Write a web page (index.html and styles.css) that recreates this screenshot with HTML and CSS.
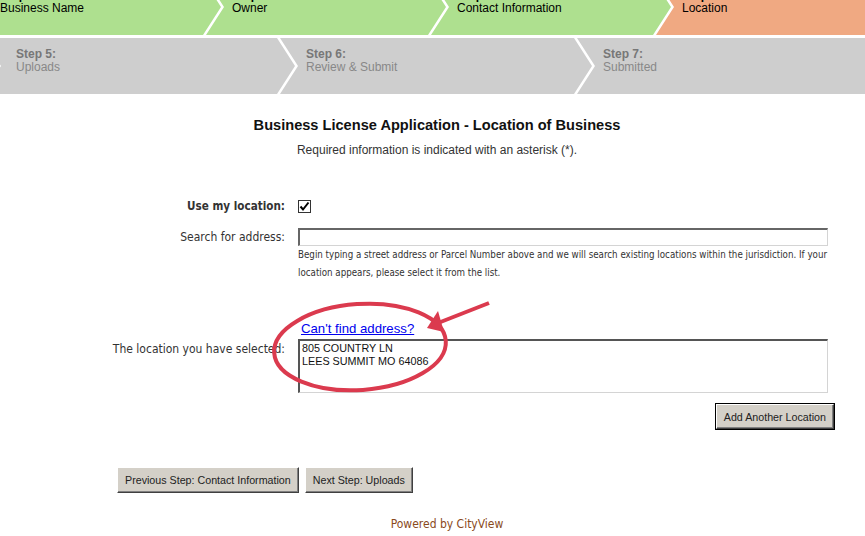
FILE: index.html
```html
<!DOCTYPE html>
<html lang="en">
<head>
    <meta charset="UTF-8">
    <meta name="viewport" content="width=device-width, initial-scale=1.0">
    <title>Business License Application - Location of Business</title>
    <link rel="stylesheet" href="styles.css">
</head>
<body>

    <div class="steps">
        <ul class="step-row row-top">
            <li class="step done"><span class="step-no">Step 1:</span><span class="step-name">Business Name</span></li>
            <li class="step done"><span class="step-no">Step 2:</span><span class="step-name">Owner</span></li>
            <li class="step done"><span class="step-no">Step 3:</span><span class="step-name">Contact Information</span></li>
            <li class="step current"><span class="step-no">Step 4:</span><span class="step-name">Location</span></li>
        </ul>
        <ul class="step-row row-bottom">
            <li class="step todo"><span class="step-no">Step 5:</span><span class="step-name">Uploads</span></li>
            <li class="step todo"><span class="step-no">Step 6:</span><span class="step-name">Review &amp; Submit</span></li>
            <li class="step todo"><span class="step-no">Step 7:</span><span class="step-name">Submitted</span></li>
        </ul>
    </div>

    <div class="content">
        <h2>Business License Application - Location of Business</h2>
        <p class="required">Required information is indicated with an asterisk (*).</p>

        <div class="form">
            <div class="form-row">
                <label class="bold">Use my location:</label>
                <span class="checkbox">
                    <svg width="11" height="11" viewBox="0 0 11 11"><path d="M1.5 5.5 L4 8.5 L9.5 1.5" fill="none" stroke="#000" stroke-width="2"/></svg>
                </span>
            </div>
            <div class="form-row top">
                <label class="pad">Search for address:</label>
                <div class="field">
                    <input type="text" class="text-input">
                    <p class="help">Begin typing a street address or Parcel Number above and we will search existing locations within the jurisdiction. If your location appears, please select it from the list.</p>
                </div>
            </div>
            <div class="form-row link-row">
                <span></span>
                <a href="#" class="cant-find">Can't find address?</a>
            </div>
            <div class="form-row top">
                <label class="pad">The location you have selected:</label>
                <textarea class="location" rows="3">805 COUNTRY LN
LEES SUMMIT MO 64086</textarea>
            </div>
        </div>

        <div class="add-row">
            <button class="btn btn-default">Add Another Location</button>
        </div>

        <div class="nav-row">
            <button class="btn">Previous Step: Contact Information</button>
            <button class="btn">Next Step: Uploads</button>
        </div>

        <p class="powered">Powered by CityView</p>
    </div>

    <svg class="annotation" width="865" height="536" viewBox="0 0 865 536">
        <ellipse cx="360" cy="347" rx="86" ry="43" transform="rotate(-4 360 347)" fill="none" stroke="#db3a4e" stroke-width="4"/>
        <line x1="489" y1="303" x2="438" y2="323" stroke="#db3a4e" stroke-width="4"/>
        <polygon points="427,328 438,311 444,332" fill="#db3a4e"/>
    </svg>

</body>
</html>
```

FILE: styles.css
```css
html, body {
    margin: 0;
    padding: 0;
    overflow: hidden;
}
body {
    position: relative;
    width: 865px;
    height: 536px;
    background: white;
    font-family: "Liberation Sans", Arial, sans-serif;
    color: #222;
}
.steps {
    margin-top: -21px;
}
.step-row {
    display: flex;
    list-style: none;
    margin: 0 0 3px 0;
    padding: 0;
    white-space: nowrap;
}
.step {
    flex: none;
    height: 56px;
    box-sizing: border-box;
    padding: 10px 0 0 26px;
    font-size: 12px;
    line-height: 13px;
    margin-left: -15px;
    clip-path: polygon(0 0, calc(100% - 18px) 0, 100% 50%, calc(100% - 18px) 100%, 0 100%, 18px 50%);
}
.step span {
    display: block;
}
.step-no {
    font-weight: bold;
}
.row-top .step {
    width: 240px;
}
.row-top .step:first-child {
    margin-left: -19px;
    padding-left: 19px;
}
.row-bottom .step {
    width: 312px;
}
.row-bottom .step:first-child {
    margin-left: -17px;
    padding-left: 33px;
}
.done {
    background: #aee08f;
    color: #000;
}
.current {
    background: #f0a982;
    color: #000;
}
.todo {
    background: #cecece;
}
.todo .step-no {
    color: #777;
}
.todo .step-name {
    color: #888;
}

.content {
    padding-left: 9px;
}
h2 {
    margin: 23px 0 0 0;
    font-size: 14.6px;
    line-height: 17px;
    text-align: center;
    color: #111;
}
.required {
    margin: 8px 0 0 0;
    font-size: 12px;
    line-height: 16px;
    text-align: center;
    color: #333;
}
.form {
    margin-top: 38px;
    font-family: "DejaVu Sans Condensed", "DejaVu Sans", sans-serif;
    font-size: 12px;
    color: #333;
}
.form-row {
    display: grid;
    grid-template-columns: 276px 530px;
    column-gap: 13px;
    align-items: center;
    min-height: 20px;
    margin-bottom: 11px;
}
.form-row.top {
    align-items: start;
}
.form-row label {
    text-align: right;
}
.bold {
    font-weight: bold;
    font-size: 11.6px;
}
.pad {
    padding-top: 3px;
}
.checkbox {
    width: 11px;
    height: 11px;
    border: 1px solid #333;
    display: flex;
    align-items: center;
    justify-content: center;
    background: white;
}
.text-input {
    display: block;
    width: 530px;
    height: 18px;
    box-sizing: border-box;
    margin: 1px 0 0 0;
    border: 1px solid;
    border-color: #666 #d4d4d4 #d4d4d4 #666;
    border-top-width: 2px;
    border-left-width: 2px;
    padding: 0 2px;
}
.help {
    margin: 0;
    font-size: 9.7px;
    line-height: 18px;
    color: #333;
}
.link-row {
    margin: 39px 0 3px 0;
    min-height: 0;
}
.cant-find {
    font-family: "Liberation Sans", Arial, sans-serif;
    font-size: 13.2px;
    line-height: 15px;
    color: #0000ee;
    padding-left: 3px;
}
.location {
    display: block;
    width: 530px;
    height: 54px;
    box-sizing: border-box;
    margin: 0;
    border: 1px solid;
    border-color: #555 #d4d4d4 #d4d4d4 #555;
    border-top-width: 2px;
    border-left-width: 2px;
    padding: 1px 2px;
    font-family: "Liberation Sans", Arial, sans-serif;
    font-size: 10.8px;
    line-height: 13px;
    color: #111;
    resize: none;
}
.add-row {
    display: flex;
    justify-content: flex-end;
    width: 825px;
    margin-top: 2px;
}
.btn {
    font-family: "Liberation Sans", Arial, sans-serif;
    font-size: 10.7px;
    color: #222;
    background: #d4d0c8;
    border: 1px solid;
    border-color: #fff #404040 #404040 #fff;
    box-shadow: inset -1px -1px 0 #808080;
    padding: 0 7px;
    height: 26px;
}
.btn-default {
    outline: 1px solid #000;
    height: 25px;
    padding: 0 7px;
}
.nav-row {
    display: flex;
    gap: 6px;
    margin: 38px 0 0 108px;
}
.powered {
    margin: 24px 0 0 0;
    font-family: "DejaVu Sans Condensed", "DejaVu Sans", sans-serif;
    font-size: 12px;
    line-height: 14px;
    text-align: center;
    color: #8a4a1c;
    padding-left: 20px;
}
.annotation {
    position: absolute;
    left: 0;
    top: 0;
    pointer-events: none;
}
```
